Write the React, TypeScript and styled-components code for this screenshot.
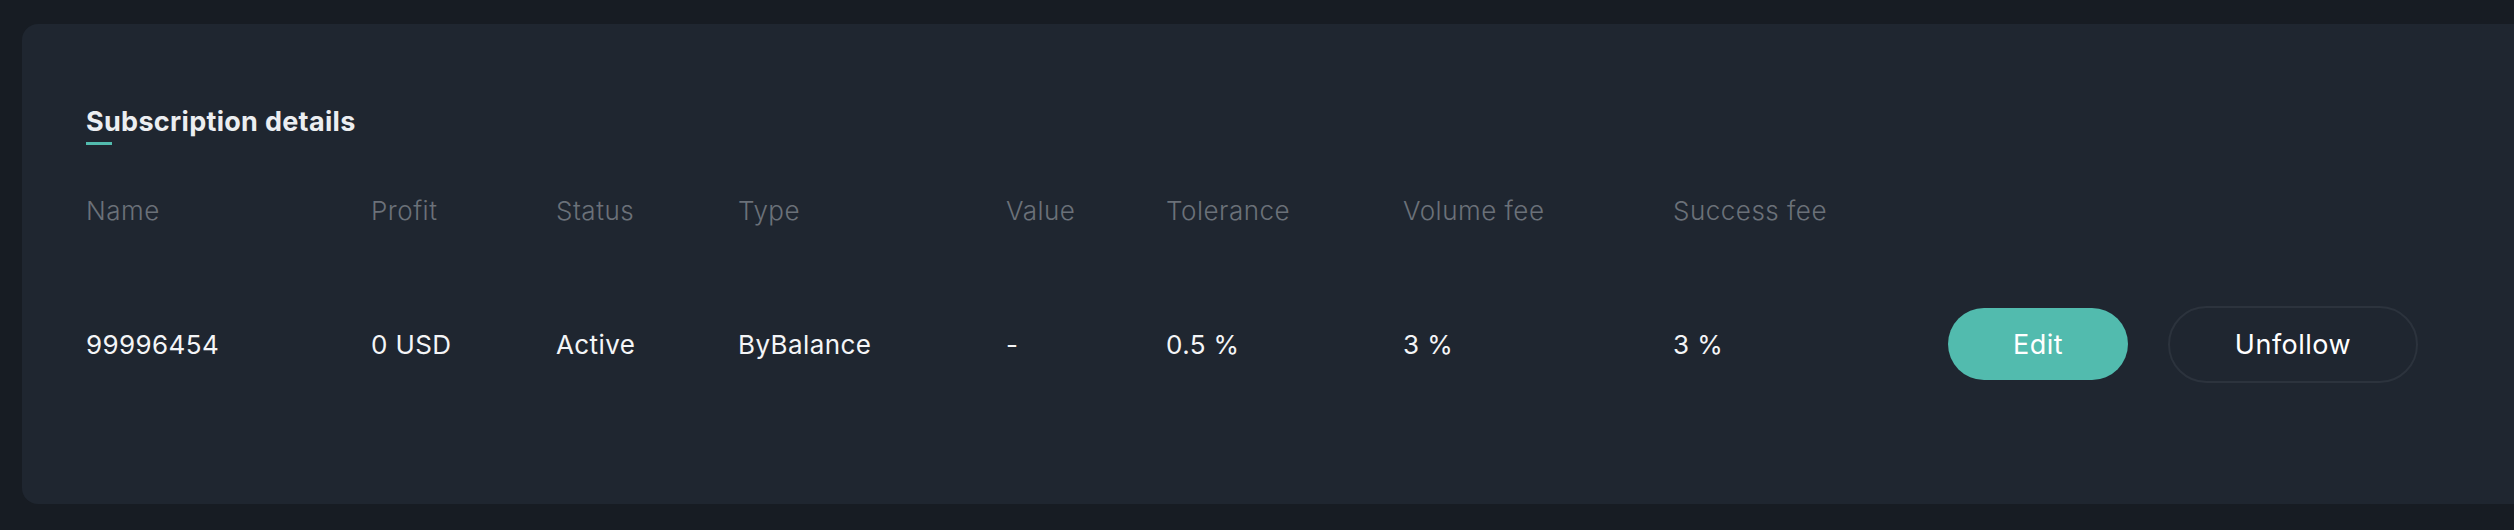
import React from 'react'
import styled, { createGlobalStyle } from 'styled-components'

const GlobalStyle = createGlobalStyle`
  html, body {
    margin: 0;
    padding: 0;
    background: #171c23;
    overflow: hidden;
  }
  body {
    font-family: Inter, "Noto Sans", sans-serif;
  }
`

const Page = styled.div`
  padding: 24px 0 26px 22px;
  width: 2560px;
`

const Card = styled.div`
  background: #1f2630;
  border-radius: 16px;
  height: 480px;
  box-sizing: border-box;
  padding: 78px 0 0 64px;
`

const Title = styled.h2`
  margin: 0;
  font-size: 27px;
  line-height: 40px;
  font-weight: 700;
  color: #eceef1;
  letter-spacing: 0.3px;
`

const Underline = styled.div`
  width: 26px;
  height: 3px;
  background: #52bbae;
`

const Table = styled.div`
  display: grid;
  grid-template-columns: 285px 185px 182px 268px 160px 237px 270px 275px auto;
  grid-template-rows: 70px 134px;
  row-gap: 32px;
  align-items: center;
  margin-top: 30px;
`

const Head = styled.div`
  font-size: 26px;
  font-weight: 300;
  letter-spacing: 0.5px;
  color: #6b7179;
`

const Cell = styled.div`
  font-size: 26px;
  font-weight: 400;
  letter-spacing: 0.4px;
  color: #f4f5f7;
`

const Actions = styled.div`
  display: flex;
  align-items: center;
  gap: 40px;
`

const Button = styled.button<{ $primary?: boolean }>`
  display: inline-flex;
  align-items: center;
  justify-content: center;
  box-sizing: border-box;
  cursor: pointer;
  font-family: inherit;
  font-size: 27px;
  letter-spacing: 0.5px;
  color: #ffffff;
  border-radius: 40px;
  width: ${(p) => (p.$primary ? '180px' : '250px')};
  height: ${(p) => (p.$primary ? '72px' : '77px')};
  background: ${(p) => (p.$primary ? '#52bbae' : 'transparent')};
  border: ${(p) => (p.$primary ? 'none' : '2px solid #2c333d')};
`

const columns = ['Name', 'Profit', 'Status', 'Type', 'Value', 'Tolerance', 'Volume fee', 'Success fee']
const row = ['99996454', '0 USD', 'Active', 'ByBalance', '-', '0.5 %', '3 %', '3 %']

const App: React.FC = () => {
  return (
    <>
      <GlobalStyle />
      <Page>
        <Card>
          <Title>Subscription details</Title>
          <Underline />
          <Table>
            {columns.map((c) => (
              <Head key={c}>{c}</Head>
            ))}
            <div />
            {row.map((v, i) => (
              <Cell key={i}>{v}</Cell>
            ))}
            <Actions>
              <Button $primary>Edit</Button>
              <Button>Unfollow</Button>
            </Actions>
          </Table>
        </Card>
      </Page>
    </>
  )
}

export default App
